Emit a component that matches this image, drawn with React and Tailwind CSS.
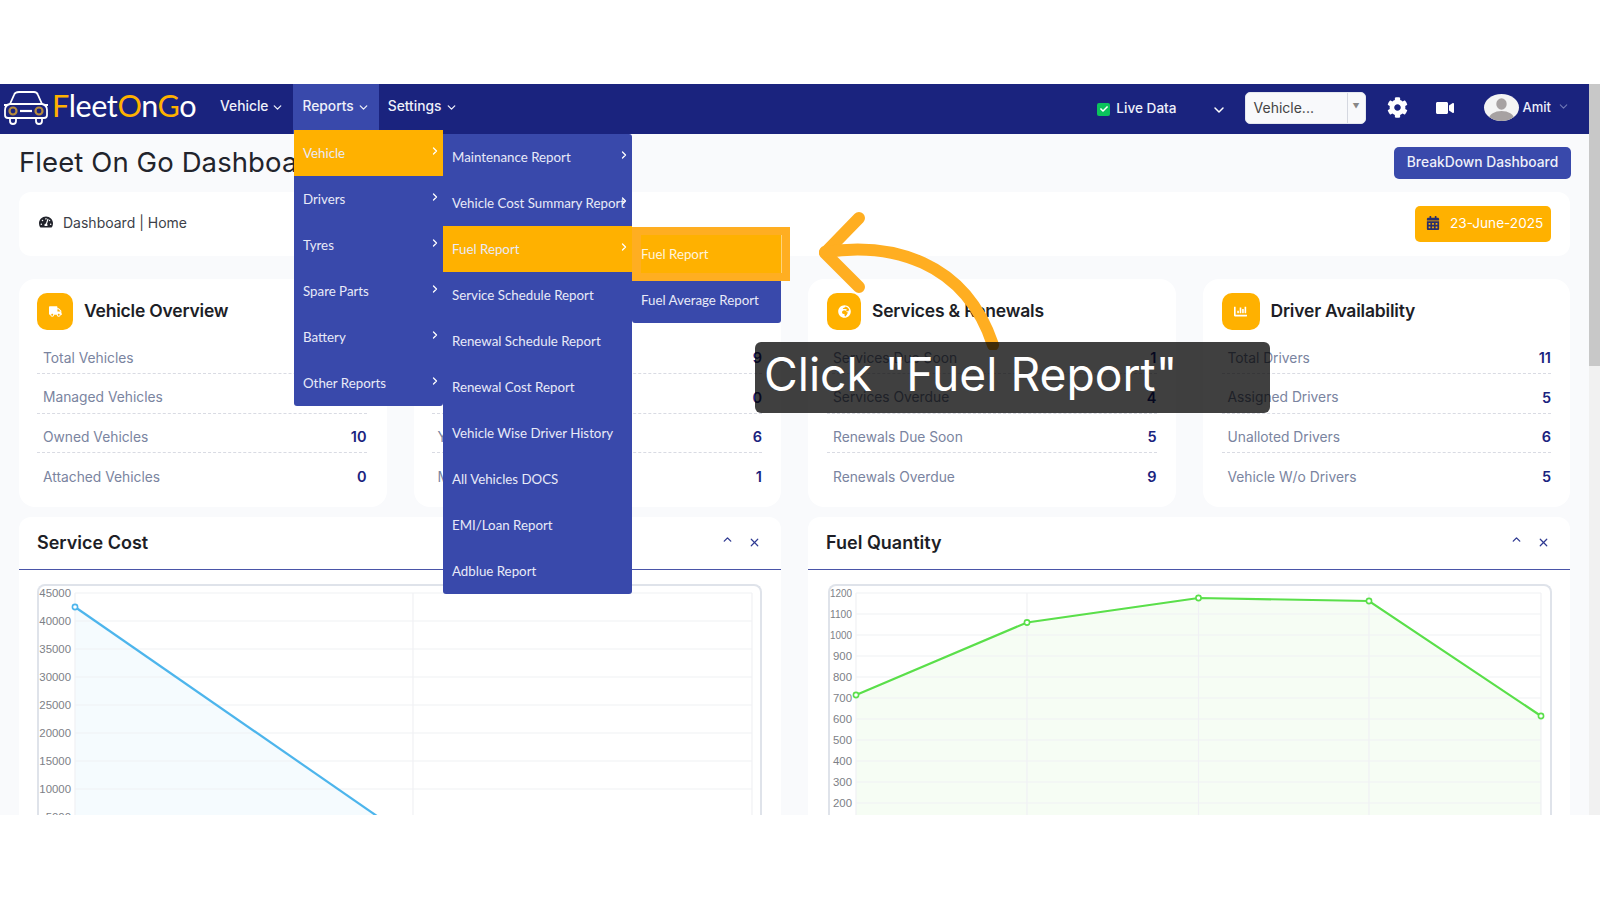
import React from "react";
import { FaTruck, FaGlobeAfrica, FaChartBar, FaCalendarAlt, FaTachometerAlt, FaCog, FaVideo, FaCheck } from "react-icons/fa";
import { ChevronDown, ChevronRight, ChevronUp, X } from "lucide-react";

const sans = "font-['Inter','Liberation_Sans',sans-serif]";
const menuFont = "font-['Lato','Noto_Sans',sans-serif]";

function NavItem({ label, active }) {
  return (
    <div className={`flex h-[50px] items-start pt-[12px] px-[9px] gap-[3px] text-[13.8px] font-medium text-[#eef0fa] ${active ? "bg-[#3949ab]" : ""}`}>
      <span className="leading-[20px]">{label}</span>
      <ChevronDown size={13} strokeWidth={2.4} className="mt-[5px]" />
    </div>
  );
}

function Logo() {
  return (
    <div className="flex items-center w-[212px] pl-[3px] h-[50px]">
      <svg width="46" height="36" viewBox="0 0 46 36" fill="none" stroke="#fff" strokeWidth="1.8" className="mt-[-3px]">
        <path d="M7 14 L11 5 Q12 2 16 2 H31 Q34 2 35 5 L39 14" />
        <path d="M7 14 Q2 15 2 20 V25 Q2 28 5 28 H41 Q44 28 44 25 V20 Q44 15 39 14 Z" />
        <path d="M7 14 H39" />
        <path d="M7 28 V31 Q7 34 10 34 T13 31 V28 M33 28 V31 Q33 34 36 34 T39 31 V28" />
        <circle cx="10" cy="21" r="3.5" stroke="#b58a3c" strokeWidth="2.2" />
        <circle cx="36" cy="21" r="3.5" stroke="#b58a3c" strokeWidth="2.2" />
        <path d="M17 21 H29" strokeWidth="2.2" />
        <path d="M1 15 H4 M42 15 H45" />
      </svg>
      <span className="ml-[3px] mt-[-6px] text-[30.6px] leading-none tracking-[-0.4px] font-['Lato',sans-serif] font-normal text-white">
        <span className="text-[#ffb100]">F</span>leet<span className="text-[#ffb100]">O</span>n<span className="text-[#ffb100]">G</span>o
      </span>
    </div>
  );
}

function Navbar() {
  return (
    <div className="flex h-[50px] items-start bg-[#1a237e] pr-[19px]">
      <Logo />
      <div className="flex ml-[-1px]">
        <NavItem label="Vehicle" />
        <NavItem label="Reports" active />
        <NavItem label="Settings" />
      </div>
      <div className="ml-auto flex items-center h-[50px] text-white">
        <span className="flex h-[13px] w-[13px] items-center justify-center rounded-[2px] bg-[#0bc35c]">
          <FaCheck size={8} color="#fff" />
        </span>
        <span className="ml-[6px] mt-[-1px] text-[13.6px] font-medium text-[#eef0fa]">Live Data</span>
        <ChevronDown size={16} strokeWidth={2.2} className="ml-[34px] mt-[1px]" />
        <div className="ml-[18px] mt-[-3px] flex h-[32px] w-[121px] items-center rounded-[5px] border border-[#e4e7ee] bg-[#f8f9fb] pl-[8px]">
          <span className="flex-1 text-[14px] text-[#444]">Vehicle...</span>
          <span className="flex h-full w-[18px] items-center justify-center border-l border-[#d5d8e0] text-[7px] text-[#888]">▼</span>
        </div>
        <FaCog size={21} className="ml-[21px] mt-[-3px]" />
        <FaVideo size={18} className="ml-[28px] mt-[-2px]" />
        <div className="ml-[30px] mt-[-3px] h-[27px] w-[35px] overflow-hidden rounded-[50%] bg-[#f4f4f4]">
          <svg width="35" height="27" viewBox="0 0 35 27" className="block">
            <ellipse cx="17.5" cy="10" rx="5.2" ry="5.8" fill="#a7a2a2" />
            <ellipse cx="17.5" cy="25" rx="12.5" ry="8" fill="#a7a2a2" />
          </svg>
        </div>
        <span className="ml-[4px] mb-[3px] text-[13px] font-medium text-[#eef0fa]">Amit</span>
        <ChevronDown size={13} className="ml-[6px] mb-[5px] text-[#6f77b5]" />
      </div>
    </div>
  );
}

function PageHead() {
  return (
    <div className="flex h-[58px] items-center justify-between">
      <h1 className="text-[27.5px] leading-none font-normal tracking-[0.1px] text-[#22242c]">Fleet On Go Dashboard</h1>
      <button className="mr-[-1px] h-[32px] w-[177px] rounded-[5px] bg-[#3949ab] pb-[2px] text-[13.8px] font-medium text-[#eef0fa]">BreakDown Dashboard</button>
    </div>
  );
}

function Breadcrumb() {
  return (
    <div className="flex h-[64px] items-center justify-between rounded-[12px] bg-white pl-[20px] pr-[19px]">
      <div className="mb-[4px] flex items-center gap-[10px] text-[14px] text-[#3d3f49]">
        <FaTachometerAlt size={14} color="#22242c" />
        <span>Dashboard | Home</span>
      </div>
      <div className="flex h-[36px] w-[136px] items-center gap-[10px] rounded-[5px] bg-[#ffb100] pb-[2px] pl-[11px] text-[13.6px] text-white">
        <FaCalendarAlt size={14} color="#2a2f6b" />
        <span>23-June-2025</span>
      </div>
    </div>
  );
}

function StatCard({ title, Icon, rows, iconW, pad }) {
  return (
    <div className={`h-[228px] rounded-[16px] bg-white pt-[14px] ${pad}`}>
      <div className="flex h-[37px] items-center gap-[11px]">
        <span className={`flex h-[37px] items-center justify-center rounded-[10px] bg-[#ffb100] ${iconW}`}>
          <Icon size={13} color="#fff" />
        </span>
        <span className="text-[17.5px] font-semibold tracking-[-0.2px] text-[#1d1e26]">{title}</span>
      </div>
      <div className="mt-[4.5px]">
        {rows.map(([label, value], i) => (
          <div key={label} className={`flex h-[39.5px] items-center justify-between pl-[6px] pt-[9px] ${i < 3 ? "border-b border-dashed border-[#d9dbe3]" : ""}`}>
            <span className="text-[13.8px] text-[#7a84a0]">{label}</span>
            <span className="text-[14.5px] font-semibold text-[#1a237e]">{value}</span>
          </div>
        ))}
      </div>
    </div>
  );
}

function ChartCard({ title, pad, children }) {
  return (
    <div className="h-[320px] rounded-t-[12px] bg-white">
      <div className="flex h-[53px] items-center justify-between border-b border-[#4a55a8] pb-[2px] pl-[18px] pr-[20px]">
        <span className="text-[18px] font-semibold text-[#1d1e26]">{title}</span>
        <div className="flex items-center gap-[14px] text-[#2f3a92]">
          <ChevronUp size={13} strokeWidth={2.5} className="mb-[5px]" />
          <X size={13} strokeWidth={2.2} />
        </div>
      </div>
      <div className={`pt-[14px] ${pad}`}>{children}</div>
    </div>
  );
}

function Chart({ labels, topY, stepY, xs, points, stroke, fill, width, plotLeft, plotRight, squeeze }) {
  const h = 300;
  const poly = points.map((p) => p.join(",")).join(" ");
  const area = `${points[0][0]},${h} ${poly} ${points[points.length - 1][0]},${h}`;
  return (
    <div className="overflow-hidden rounded-t-[8px] border-2 border-b-0 border-[#dfe3ea]">
      <svg width={width} height={h} className="block">
        <polygon points={area} fill={fill} />
        {labels.map((l, i) => (
          <g key={l}>
            <line x1={plotLeft} x2={plotRight} y1={topY + i * stepY} y2={topY + i * stepY} stroke="#f0f1f4" strokeWidth="1.2" />
            <text
              x={plotLeft - 4}
              y={topY + i * stepY + 3.5}
              textAnchor="end"
              fontSize="11.4"
              fill="#7d7f87"
              fontFamily="'Liberation Sans', sans-serif"
              {...(squeeze ? { textLength: l.length === 4 ? 22 : 19, lengthAdjust: "spacingAndGlyphs" } : {})}
            >
              {l}
            </text>
          </g>
        ))}
        {xs.map((x) => (
          <line key={x} x1={x} x2={x} y1={topY} y2={h} stroke="#f0f1f4" strokeWidth="1.2" />
        ))}
        <polyline points={poly} fill="none" stroke={stroke} strokeWidth="2.2" />
        {points.map(([x, y]) => (
          <circle key={x} cx={x} cy={y} r="2.6" fill="#fff" stroke={stroke} strokeWidth="1.6" />
        ))}
      </svg>
    </div>
  );
}

function MenuRow({ label, active, arrow }) {
  return (
    <div className={`relative flex h-[46px] items-center pl-[9px] pt-[2px] text-[13.3px] text-[#e8eaf8] ${active ? "bg-[#ffb100]" : ""}`}>
      <span className="whitespace-nowrap">{label}</span>
      {arrow && <ChevronRight size={12} strokeWidth={2.6} className="absolute right-[2px] top-[15px] text-white" />}
    </div>
  );
}

function Menus() {
  const l1 = ["Vehicle", "Drivers", "Tyres", "Spare Parts", "Battery", "Other Reports"];
  const l2 = ["Maintenance Report", "Vehicle Cost Summary Report", "Fuel Report", "Service Schedule Report", "Renewal Schedule Report", "Renewal Cost Report", "Vehicle Wise Driver History", "All Vehicles DOCS", "EMI/Loan Report", "Adblue Report"];
  return (
    <div className={menuFont}>
      <div className="absolute left-[294px] top-[46px] w-[149px] rounded-b-[3px] bg-[#3949ab]">
        {l1.map((l, i) => <MenuRow key={l} label={l} active={i === 0} arrow />)}
      </div>
      <div className="absolute left-[443px] top-[50px] w-[189px] rounded-b-[3px] rounded-tr-[3px] bg-[#3949ab]">
        {l2.map((l, i) => <MenuRow key={l} label={l} active={i === 2} arrow={i < 3} />)}
      </div>
      <div className="absolute left-[632px] top-[147px] w-[149px] rounded-b-[3px] bg-[#3949ab]">
        <MenuRow label="Fuel Report" />
        <MenuRow label="Fuel Average Report" />
      </div>
      <div className="absolute left-[632px] top-[143px] flex h-[54px] w-[158px] border-[8px] border-l-[9px] border-[#ffae21] bg-[#ffb100]">
        <span className="flex flex-1 items-center border-r border-[#ffd27a] pt-[2px] text-[13.3px] text-[#fff4dc]">Fuel Report</span>
      </div>
    </div>
  );
}

function Callout() {
  return (
    <>
      <svg width="200" height="145" viewBox="810 205 200 145" className="absolute left-[810px] top-[121px]" fill="none" stroke="#ffae21" strokeWidth="12" strokeLinecap="round" strokeLinejoin="round">
        <path d="M859 218 L825 253 L859 287" />
        <path d="M825 252 C890 242 965 260 993 345" />
      </svg>
      <div className="absolute left-[755px] top-[258px] flex h-[71px] w-[515px] items-center rounded-[6px] bg-black/75 pb-[7px] pl-[9px] text-[46.2px] font-normal leading-none text-white">
        Click "Fuel Report"
      </div>
    </>
  );
}

export default function App() {
  const cards = [
    { title: "Vehicle Overview", Icon: FaTruck, iconW: "w-[36px]", pad: "pl-[18px] pr-[20px]", rows: [["Total Vehicles", "10"], ["Managed Vehicles", "0"], ["Owned Vehicles", "10"], ["Attached Vehicles", "0"]] },
    { title: "Vehicle Status", Icon: FaTruck, iconW: "w-[36px]", pad: "pl-[18px] pr-[19px]", rows: [["Vehicles On Road", "9"], ["Vehicles In Shop", "0"], ["Yard Vehicles", "6"], ["Maintenance Due", "1"]] },
    { title: "Services & Renewals", Icon: FaGlobeAfrica, iconW: "w-[34px]", pad: "pl-[19px] pr-[19px]", rows: [["Services Due Soon", "1"], ["Services Overdue", "4"], ["Renewals Due Soon", "5"], ["Renewals Overdue", "9"]] },
    { title: "Driver Availability", Icon: FaChartBar, iconW: "w-[38px]", pad: "pl-[19px] pr-[19px]", rows: [["Total Drivers", "11"], ["Assigned Drivers", "5"], ["Unalloted Drivers", "6"], ["Vehicle W/o Drivers", "5"]] },
  ];
  return (
    <div className={`flex h-[900px] flex-col bg-white ${sans}`}>
      <div className="h-[84px]" />
      <div className="relative flex h-[731px] overflow-hidden">
        <div className="w-[1589px] bg-[#f9fafc]">
          <Navbar />
          <div className="pl-[19px] pr-[19px]">
            <PageHead />
            <Breadcrumb />
            <div className="mt-[23px] grid grid-cols-4 gap-x-[27px]">
              {cards.map((c) => <StatCard key={c.title} {...c} />)}
            </div>
            <div className="mt-[10px] grid grid-cols-2 gap-x-[27px]">
              <ChartCard title="Service Cost" pad="pl-[18px] pr-[19px]">
                <Chart
                  width={721} labels={["45000","40000","35000","30000","25000","20000","15000","10000","5000"]}
                  topY={7} stepY={28} plotLeft={36} plotRight={713} xs={[36, 374, 713]}
                  points={[[36, 21], [374, 255]]} stroke="#4db5ec" fill="#f5fbfe"
                />
              </ChartCard>
              <ChartCard title="Fuel Quantity" pad="pl-[20px] pr-[18px]">
                <Chart
                  width={720} squeeze labels={["1200","1100","1000","900","800","700","600","500","400","300","200","100"]}
                  topY={7} stepY={21} plotLeft={26} plotRight={711} xs={[26, 197, 368.5, 539, 711]}
                  points={[[26, 109], [197, 36.5], [368.5, 12], [539, 15], [711, 130]]} stroke="#5adf4a" fill="#f6fdf4"
                />
              </ChartCard>
            </div>
          </div>
        </div>
        <div className="flex w-[11px] flex-col bg-[#f1f1f1]">
          <div className="h-[282px] bg-[#c8c8c8]" />
        </div>
        <Menus />
        <Callout />
      </div>
      <div className="h-[85px]" />
    </div>
  );
}
